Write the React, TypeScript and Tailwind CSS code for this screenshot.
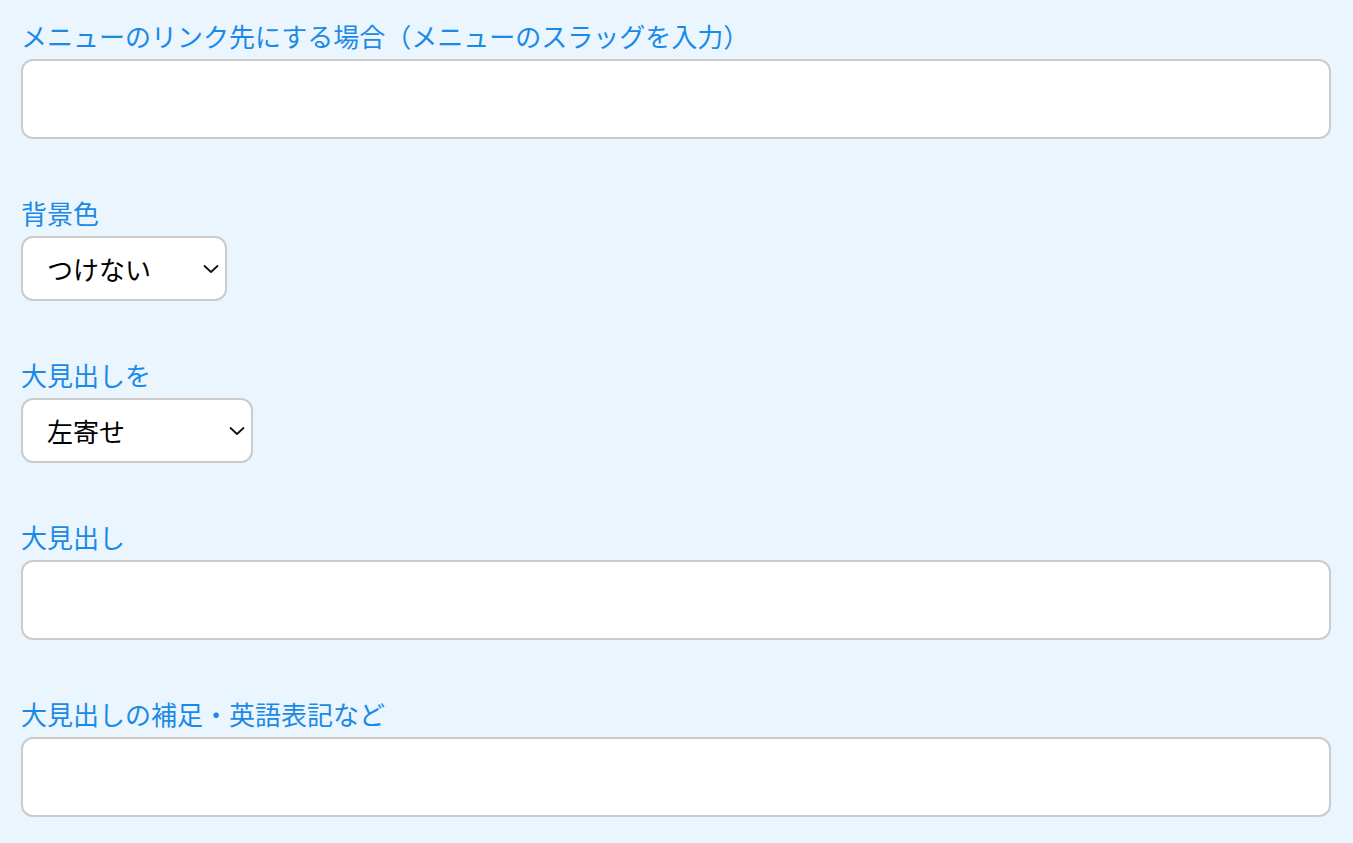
import React, { useState } from 'react';

const font = { fontFamily: '"Noto Sans CJK JP", "Noto Sans", sans-serif' };

function Label({ children }: { children: React.ReactNode }) {
  return (
    <label className="block text-[26px] leading-[36px] text-[#1b8ae6] mb-[5px]">
      {children}
    </label>
  );
}

function TextField() {
  const [value, setValue] = useState('');
  return (
    <input
      type="text"
      value={value}
      onChange={(e) => setValue(e.target.value)}
      className="block w-full h-[80px] bg-white border-2 border-[#cbcbcb] rounded-[12px] px-5 text-[26px] outline-none"
    />
  );
}

function SelectField({ options, width }: { options: string[]; width: string }) {
  const [value, setValue] = useState(options[0]);
  return (
    <div className={`relative ${width}`}>
      <select
        value={value}
        onChange={(e) => setValue(e.target.value)}
        className="block w-full h-[65px] appearance-none bg-white border-2 border-[#cbcbcb] rounded-[12px] pl-[24px] pr-10 text-[26px] text-black outline-none"
      >
        {options.map((o) => (
          <option key={o} value={o}>
            {o}
          </option>
        ))}
      </select>
      <svg
        className="absolute right-[8px] top-1/2 -translate-y-1/2 pointer-events-none"
        width="16"
        height="10"
        viewBox="0 0 16 10"
        fill="none"
      >
        <path d="M1.5 2L8 8L14.5 2" stroke="#111" strokeWidth="1.8" strokeLinecap="round" strokeLinejoin="round" />
      </svg>
    </div>
  );
}

export default function App() {
  return (
    <div className="min-h-screen bg-[#eaf5fe] pl-[21px] pr-[22px] pt-[18px] pb-10" style={font}>
      <div className="flex flex-col gap-[56px]">
        <div>
          <Label>メニューのリンク先にする場合（メニューのスラッグを入力）</Label>
          <TextField />
        </div>

        <div>
          <Label>背景色</Label>
          <SelectField options={['つけない', 'つける']} width="w-[206px]" />
        </div>

        <div>
          <Label>大見出しを</Label>
          <SelectField options={['左寄せ', '中央寄せ', '右寄せ']} width="w-[232px]" />
        </div>

        <div>
          <Label>大見出し</Label>
          <TextField />
        </div>

        <div>
          <Label>大見出しの補足・英語表記など</Label>
          <TextField />
        </div>
      </div>
    </div>
  );
}
